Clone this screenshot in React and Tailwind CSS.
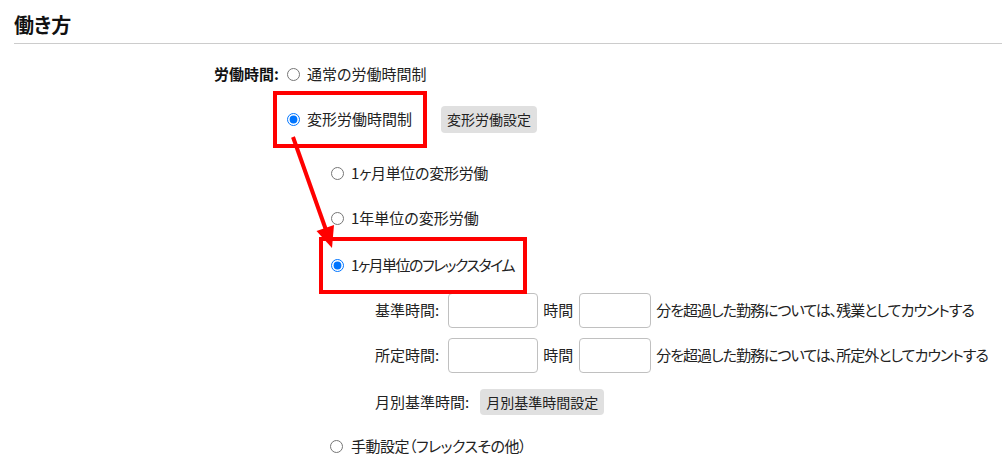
import React from "react";

const FONT = {
  fontFamily: '"Noto Sans CJK JP", "Noto Sans", sans-serif',
  fontFeatureSettings: '"palt" 1',
};

function Radio({ checked = false }) {
  return (
    <input
      type="radio"
      readOnly
      checked={checked}
      className="m-0 w-[13px] h-[13px] shrink-0"
    />
  );
}

export default function App() {
  return (
    <div
      className="relative w-[1002px] h-[463px] overflow-hidden bg-white text-[#222]"
      style={FONT}
    >
      <div className="pl-[14px]">
        <h2 className="pt-[11px] pb-[4px] border-b border-[#cccccc] text-[20px] leading-[28px] font-bold text-[#111]">
          働き方
        </h2>
      </div>

      <div className="pt-[12px] text-[15px] leading-[20px] whitespace-nowrap">
        {/* row 1 */}
        <div className="flex items-center h-[36px]">
          <span className="w-[279px] shrink-0 text-right font-bold text-[#111]">労働時間:</span>
          <span className="ml-[8px] inline-flex items-center gap-[7px]">
            <Radio />
            <span>通常の労働時間制</span>
          </span>
        </div>

        {/* row 2 */}
        <div className="flex items-center h-[36px] mt-[9px] pl-[287px]">
          <span className="relative inline-flex items-center gap-[7px]">
            <span className="pointer-events-none absolute left-[-14px] right-[-15px] top-[-18px] bottom-[-19px] border-4 border-[#ff0000]" />
            <Radio checked />
            <span>変形労働時間制</span>
          </span>
          <button className="ml-[29px] h-[27px] px-[6px] rounded-[4px] bg-[#e0e0e0] text-[14px] text-[#222]">
            変形労働設定
          </button>
        </div>

        {/* row 3 */}
        <div className="flex items-center h-[36px] mt-[18px] pl-[331px] gap-[7px]">
          <Radio />
          <span className="tracking-[-0.3px]">1ヶ月単位の変形労働</span>
        </div>

        {/* row 4 */}
        <div className="flex items-center h-[36px] mt-[9px] pl-[331px] gap-[7px]">
          <Radio />
          <span>1年単位の変形労働</span>
        </div>

        {/* row 5 */}
        <div className="flex items-center h-[36px] mt-[11px] pl-[331px]">
          <span className="relative inline-flex items-center gap-[7px]">
            <span className="pointer-events-none absolute left-[-12px] right-[-13px] top-[-18px] bottom-[-19px] border-4 border-[#ff0000]" />
            <Radio checked />
            <span className="tracking-[-1.5px]">1ヶ月単位のフレックスタイム</span>
          </span>
        </div>

        {/* row 6 */}
        <div className="flex items-center h-[36px] mt-[9px] pl-[375px]">
          <span className="shrink-0">基準時間:</span>
          <input className="ml-[9px] shrink-0 w-[90px] h-[35px] border border-[#c0c0c0] rounded-[4px] bg-white" />
          <span className="ml-[5px] shrink-0">時間</span>
          <input className="ml-[6px] shrink-0 w-[72px] h-[35px] border border-[#c0c0c0] rounded-[4px] bg-white" />
          <span className="ml-[5px] tracking-[-1px]">分を超過した勤務については、残業としてカウントする</span>
        </div>

        {/* row 7 */}
        <div className="flex items-center h-[36px] mt-[9px] pl-[375px]">
          <span className="shrink-0">所定時間:</span>
          <input className="ml-[9px] shrink-0 w-[90px] h-[35px] border border-[#c0c0c0] rounded-[4px] bg-white" />
          <span className="ml-[5px] shrink-0">時間</span>
          <input className="ml-[6px] shrink-0 w-[72px] h-[35px] border border-[#c0c0c0] rounded-[4px] bg-white" />
          <span className="ml-[5px] tracking-[-1px]">分を超過した勤務については、所定外としてカウントする</span>
        </div>

        {/* row 8 */}
        <div className="flex items-center h-[36px] mt-[11px] pl-[375px]">
          <span className="shrink-0">月別基準時間:</span>
          <button className="ml-[11px] h-[26px] px-[6px] rounded-[4px] bg-[#e0e0e0] text-[14px] text-[#222]">
            月別基準時間設定
          </button>
        </div>

        {/* row 9 */}
        <div className="flex items-center h-[36px] mt-[8px] pl-[330px] gap-[8px]">
          <Radio />
          <span className="tracking-[-0.5px]">手動設定（フレックスその他）</span>
        </div>
      </div>

      {/* annotation arrow */}
      <svg
        className="pointer-events-none absolute left-0 top-0"
        width="1002"
        height="463"
        viewBox="0 0 1002 463"
      >
        <line x1="293" y1="137" x2="326" y2="230" stroke="#ff0000" strokeWidth="4" />
        <polygon points="332,248 316.5,231 334,225" fill="#ff0000" />
      </svg>
    </div>
  );
}
